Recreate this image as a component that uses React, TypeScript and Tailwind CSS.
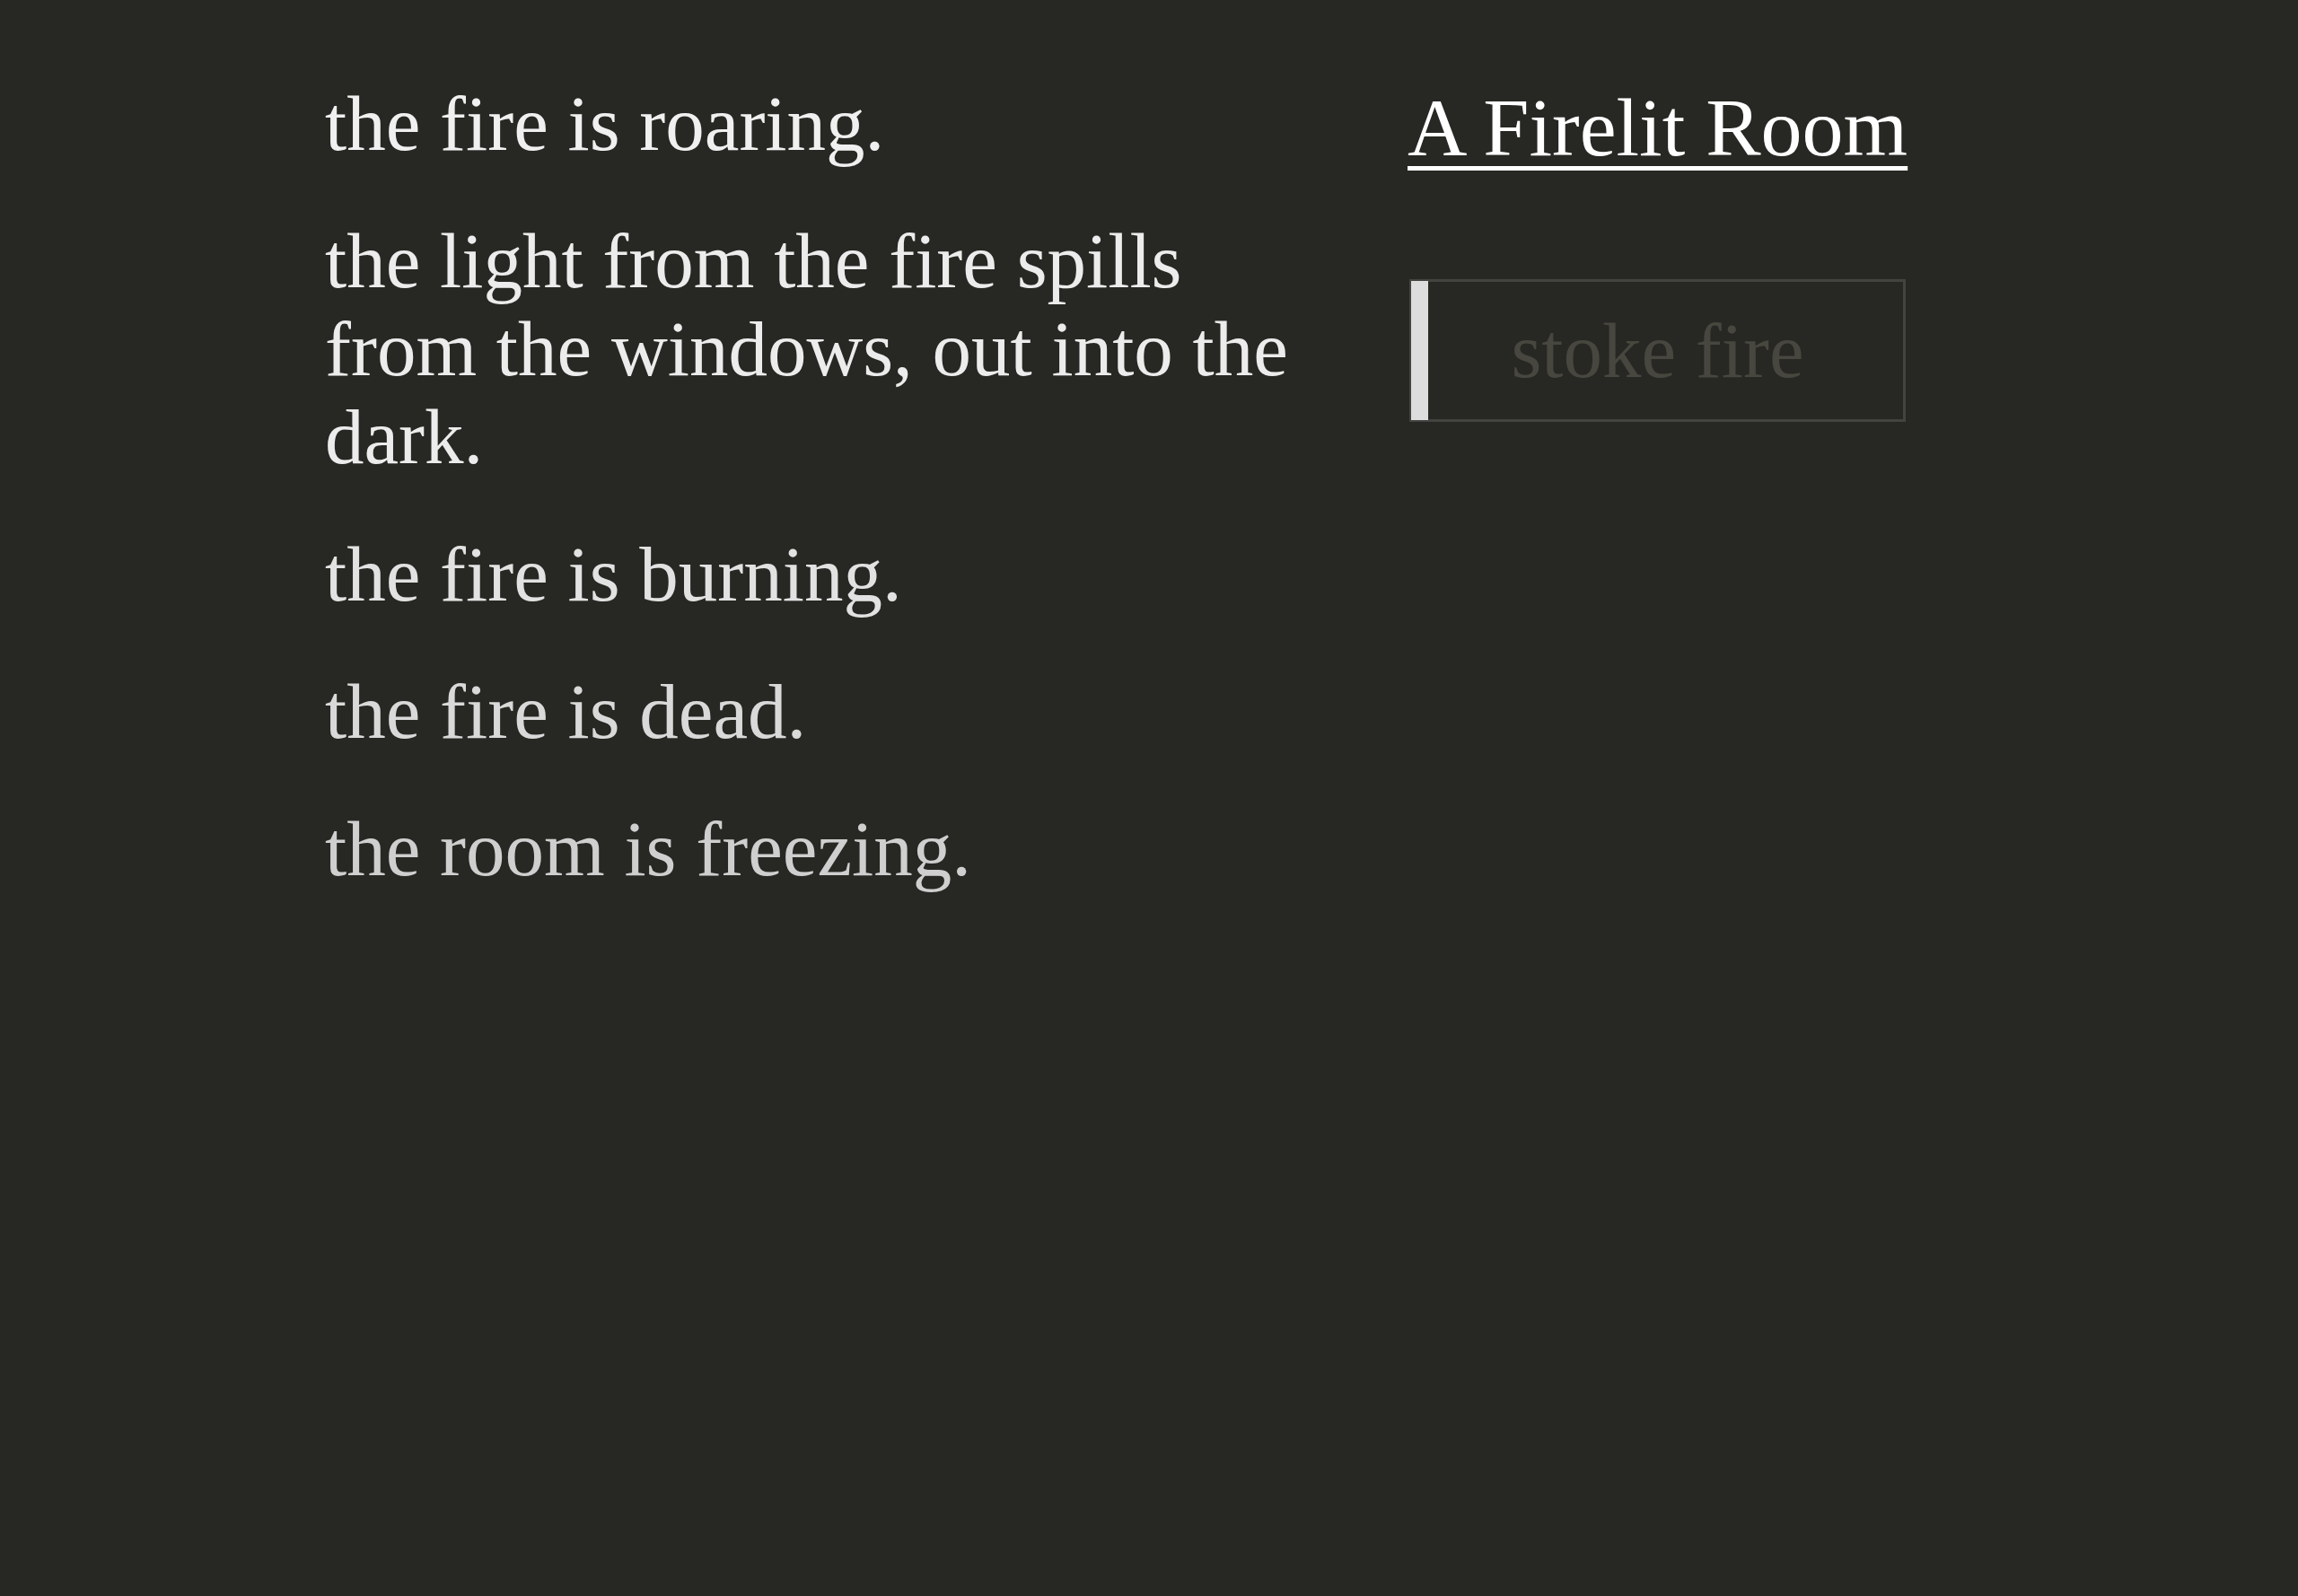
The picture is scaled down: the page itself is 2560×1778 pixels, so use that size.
const notes = [
    {text: "the fire is roaring.", color: "text-[#f0f0f0]"},
    {text: "the light from the fire spills from the windows, out into the dark.", color: "text-[#ececec]"},
    {text: "the fire is burning.", color: "text-[#e2e2e2]"},
    {text: "the fire is dead.", color: "text-[#d9d9d9]"},
    {text: "the room is freezing.", color: "text-[#cfcfcf]"},
]

export default function App() {
    return (
        <div className="min-h-screen w-full bg-[#272823] font-['Liberation_Serif','Times_New_Roman',serif]">
            <div className="flex pl-[362px] pt-[89px]">
                <div className="w-[1090px] shrink-0">
                    {notes.map((note) => (
                        <div key={note.text} className={`mb-[55px] text-[87px] leading-[98px] ${note.color}`}>
                            {note.text}
                        </div>
                    ))}
                </div>

                <div className="ml-[116px] flex flex-col">
                    <div className="text-[92px] leading-[106px] text-white underline decoration-[5px] underline-offset-[12px] cursor-pointer">
                        A Firelit Room
                    </div>

                    <div className="relative ml-[2px] mt-[116px] flex h-[159px] w-[553px] items-center justify-center border-[3px] border-[#434340] text-[87px] leading-[98px] text-[#47473f]">
                        <div className="absolute top-[-1px] bottom-[-1px] left-[-1px] w-[19px] bg-[#dddddd]"></div>
                        stoke fire
                    </div>
                </div>
            </div>
        </div>
    )
}
